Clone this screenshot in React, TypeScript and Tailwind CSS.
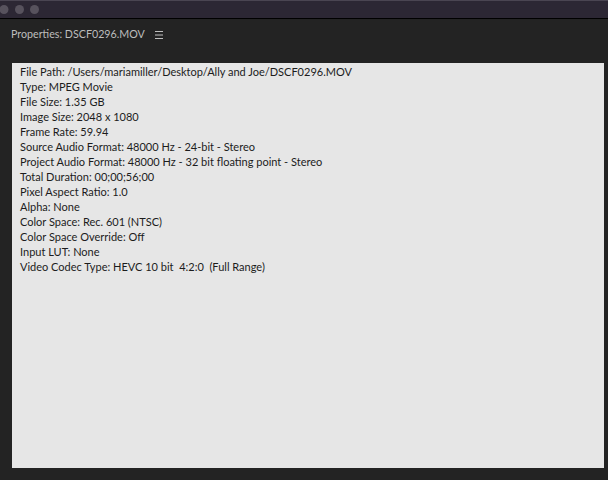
import React from "react";

const lines = [
  "File Path: /Users/mariamiller/Desktop/Ally and Joe/DSCF0296.MOV",
  "Type: MPEG Movie",
  "File Size: 1.35 GB",
  "Image Size: 2048 x 1080",
  "Frame Rate: 59.94",
  "Source Audio Format: 48000 Hz - 24-bit - Stereo",
  "Project Audio Format: 48000 Hz - 32 bit floating point - Stereo",
  "Total Duration: 00;00;56;00",
  "Pixel Aspect Ratio: 1.0",
  "Alpha: None",
  "Color Space: Rec. 601 (NTSC)",
  "Color Space Override: Off",
  "Input LUT: None",
  "Video Codec Type: HEVC 10 bit  4:2:0  (Full Range)",
];

export default function App() {
  return (
    <div
      className="w-[608px] h-[480px] bg-[#232323] flex flex-col overflow-hidden"
      style={{ fontFamily: "Lato, 'Open Sans', sans-serif" }}
    >
      <div className="h-[19px] shrink-0 bg-[#2c2734] border-t border-[#4a4552] border-b border-b-black flex items-center gap-[6px]">
        <div className="w-[9px] h-[9px] rounded-full bg-[#57525d] -translate-x-[0.5px]" />
        <div className="w-[9px] h-[9px] rounded-full bg-[#57525d]" />
        <div className="w-[9px] h-[9px] rounded-full bg-[#57525d]" />
      </div>
      <div className="h-[31px] shrink-0 flex items-center pl-[11px] gap-[10px] text-[#bdbdbd] text-[10.7px]">
        <span>Properties: DSCF0296.MOV</span>
        <svg width="8" height="8" viewBox="0 0 8 8" className="mt-[1px]">
          <rect x="0" y="0" width="8" height="1" fill="#bdbdbd" />
          <rect x="0" y="3.5" width="8" height="1" fill="#bdbdbd" />
          <rect x="0" y="7" width="8" height="1" fill="#bdbdbd" />
        </svg>
      </div>
      <div className="ml-[12px] mr-[4px] mt-[13px] h-[405px] bg-[#e6e6e6] pl-[8px] pt-[1px] text-[#1c1c1c] text-[11px] leading-[15px]">
        {lines.map((l, i) => (
          <div key={i} className="whitespace-pre">
            {l}
          </div>
        ))}
      </div>
    </div>
  );
}
